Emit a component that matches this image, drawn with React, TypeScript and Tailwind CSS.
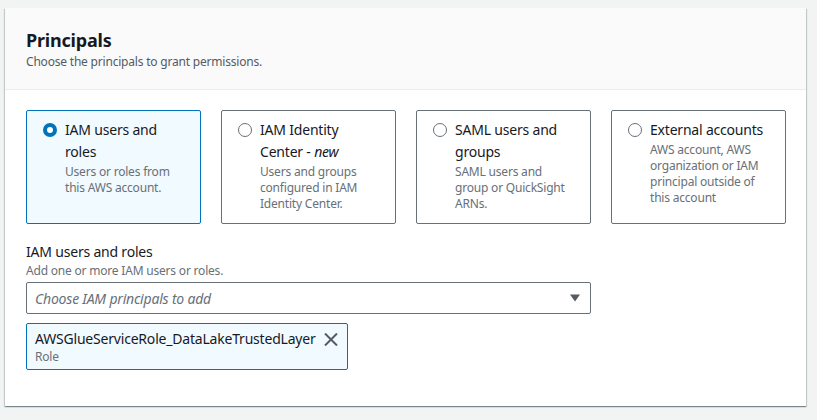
import React from "react";

type Tile = { title: React.ReactNode; desc: string; selected?: boolean };

const tiles: Tile[] = [
  { title: "IAM users and roles", desc: "Users or roles from this AWS account.", selected: true },
  {
    title: (
      <>
        IAM Identity Center - <i>new</i>
      </>
    ),
    desc: "Users and groups configured in IAM Identity Center.",
  },
  { title: "SAML users and groups", desc: "SAML users and group or QuickSight ARNs." },
  { title: "External accounts", desc: "AWS account, AWS organization or IAM principal outside of this account" },
];

function Radio({ selected }: { selected?: boolean }) {
  return selected ? (
    <span className="mt-[4px] flex h-[14px] w-[14px] shrink-0 items-center justify-center rounded-full bg-[#0073bb]">
      <span className="h-[6px] w-[6px] rounded-full bg-white" />
    </span>
  ) : (
    <span className="mt-[4px] h-[14px] w-[14px] shrink-0 rounded-full border border-[#687078] bg-white" />
  );
}

export default function App() {
  return (
    <div
      className="min-h-[420px] w-full bg-[#f2f3f3] pt-[8px] pl-[5px] tracking-[-0.2px]"
      style={{ fontFamily: '"Noto Sans", "Open Sans", Arial, sans-serif' }}
    >
      <div className="w-[801px] bg-white shadow-[0_1px_1px_0_rgba(0,28,36,0.3),1px_1px_1px_0_rgba(0,28,36,0.15),-1px_1px_1px_0_rgba(0,28,36,0.15)]">
        <div className="border-b border-[#eaeded] bg-[#fafafa] px-[21px] pt-[21px] pb-[19px]">
          <h2 className="text-[18px] font-bold leading-[22px] text-[#16191f]">Principals</h2>
          <p className="mt-[3px] text-[12px] leading-[16px] text-[#545b64]">Choose the principals to grant permissions.</p>
        </div>
        <div className="px-[21px] pt-[20px] pb-[36px]">
          <div className="grid w-[760px] grid-cols-4 gap-[20px]">
            {tiles.map((t, i) => (
              <div
                key={i}
                className={
                  "flex gap-[8px] rounded-[2px] border pt-[8px] pr-[14px] pb-[11px] pl-[16px] " +
                  (t.selected ? "border-[#0073bb] bg-[#f1faff]" : "border-[#687078] bg-white")
                }
              >
                <Radio selected={t.selected} />
                <div className="min-w-0">
                  <div className="text-[14px] leading-[22px] text-[#16191f]">{t.title}</div>
                  <div className="mt-[1px] text-[12px] leading-[16px] text-[#687078]">{t.desc}</div>
                </div>
              </div>
            ))}
          </div>

          <div className="mt-[17px] text-[14px] leading-[22px] text-[#16191f]">IAM users and roles</div>
          <div className="text-[12px] leading-[16px] text-[#687078]">Add one or more IAM users or roles.</div>
          <div className="mt-[3px] flex h-[32px] w-[565px] items-center justify-between rounded-[2px] border border-[#687078] bg-white pl-[8px] pr-[10px]">
            <span className="text-[14px] italic text-[#687078]">Choose IAM principals to add</span>
            <svg width="10" height="8" viewBox="0 0 10 8">
              <path d="M0 0.5 H10 L5 7.5 Z" fill="#545b64" />
            </svg>
          </div>

          <div className="mt-[9px] flex w-[322px] items-start justify-between rounded-[2px] border border-[#0073bb] bg-[#f1faff] pt-[5px] pb-[4px] pl-[8px] pr-[9px]">
            <div>
              <div className="text-[14px] leading-[20px] text-[#16191f]">AWSGlueServiceRole_DataLakeTrustedLayer</div>
              <div className="text-[12px] leading-[16px] text-[#687078]">Role</div>
            </div>
            <svg className="mt-[4px] ml-[8px] shrink-0" width="14" height="13" viewBox="0 0 14 13">
              <path d="M1 0.5 L13 12.5 M13 0.5 L1 12.5" stroke="#545b64" strokeWidth="2" fill="none" />
            </svg>
          </div>
        </div>
      </div>
    </div>
  );
}
